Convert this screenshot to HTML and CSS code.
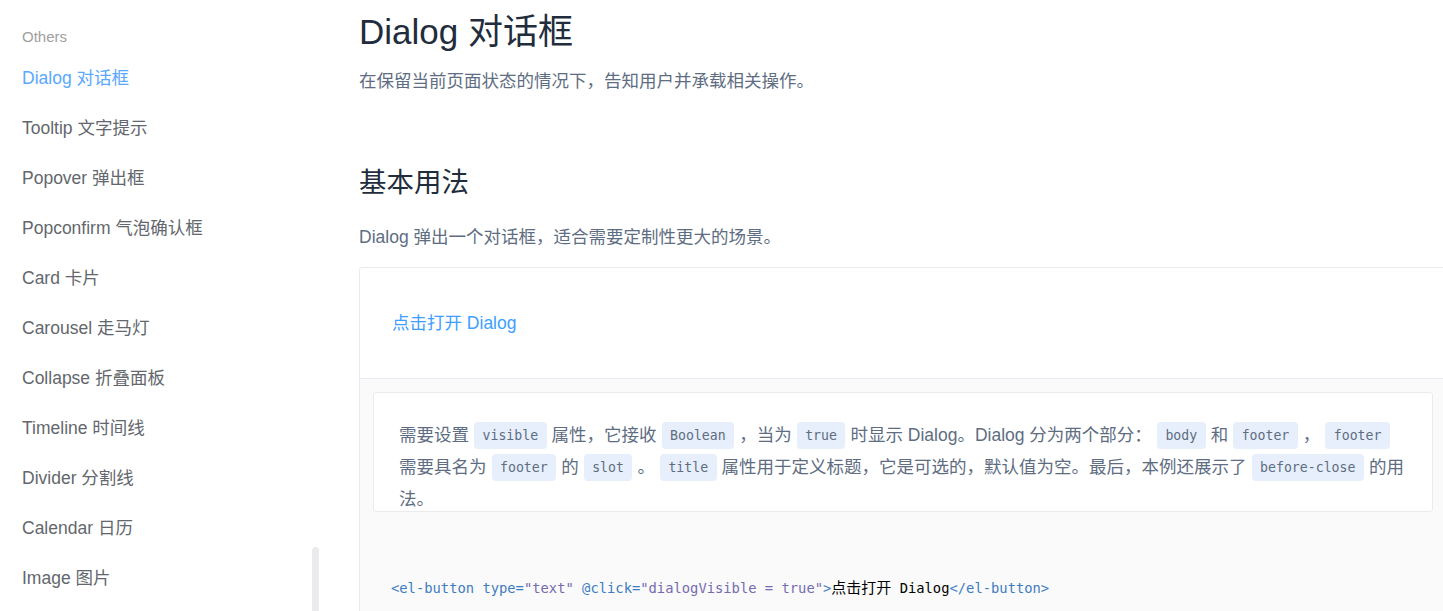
FILE: index.html
```html
<!DOCTYPE html>
<html lang="zh-CN">
<head>
<meta charset="utf-8">
<title>Dialog 对话框</title>
<link rel="stylesheet" href="styles.css">
</head>
<body>
<div class="page">
  <aside class="sidebar">
    <div class="group-title">Others</div>
    <ul class="nav">
      <li class="nav-item active">Dialog 对话框</li>
      <li class="nav-item">Tooltip 文字提示</li>
      <li class="nav-item">Popover 弹出框</li>
      <li class="nav-item">Popconfirm 气泡确认框</li>
      <li class="nav-item">Card 卡片</li>
      <li class="nav-item">Carousel 走马灯</li>
      <li class="nav-item">Collapse 折叠面板</li>
      <li class="nav-item">Timeline 时间线</li>
      <li class="nav-item">Divider 分割线</li>
      <li class="nav-item">Calendar 日历</li>
      <li class="nav-item">Image 图片</li>
    </ul>
    <div class="scroll-thumb"></div>
  </aside>
  <main class="main">
    <h2 class="title">Dialog 对话框</h2>
    <p class="lead">在保留当前页面状态的情况下，告知用户并承载相关操作。</p>
    <h3 class="subtitle">基本用法</h3>
    <p class="lead lead-sub">Dialog 弹出一个对话框，适合需要定制性更大的场景。</p>
    <div class="demo-block">
      <div class="source">
        <span class="text-button">点击打开 Dialog</span>
      </div>
      <div class="meta">
        <div class="description">需要设置<code class="chip">visible</code>属性，它接收<code class="chip">Boolean</code>，当为<code class="chip">true</code>时显示 Dialog。Dialog 分为两个部分：<code class="chip">body</code>和<code class="chip">footer</code>，<code class="chip">footer</code>需要具名为<code class="chip">footer</code>的<code class="chip">slot</code>。<code class="chip">title</code>属性用于定义标题，它是可选的，默认值为空。最后，本例还展示了<code class="chip">before-close</code>的用法。</div>
        <pre class="code"><span class="tag">&lt;el-button</span> <span class="attr">type=</span><span class="str">"text"</span> <span class="attr">@click=</span><span class="str">"dialogVisible = true"</span><span class="tag">&gt;</span><span class="cjk">点击打开</span><span class="plain"> Dialog</span><span class="tag">&lt;/el-button&gt;</span></pre>
      </div>
    </div>
  </main>
</div>
</body>
</html>
```
FILE: styles.css
```css
html, body {
  margin: 0;
  padding: 0;
  overflow: hidden;
  background: #fff;
}
body {
  font-family: "Liberation Sans", "Noto Sans CJK SC", sans-serif;
  width: 1443px;
  height: 611px;
}
.page {
  display: flex;
  align-items: flex-start;
  height: 611px;
  overflow: hidden;
}
.sidebar {
  position: relative;
  flex: none;
  width: 359px;
  height: 611px;
  padding-left: 22px;
  box-sizing: border-box;
}
.group-title {
  margin-top: 24px;
  margin-bottom: 3px;
  line-height: 26px;
  font-size: 15px;
  color: #a0a0a0;
}
.nav {
  list-style: none;
  margin: 0;
  padding: 0;
}
.nav-item {
  line-height: 50px;
  height: 50px;
  font-size: 17.5px;
  color: #63676d;
}
.nav-item.active {
  color: #5aa8ff;
}
.scroll-thumb {
  position: absolute;
  left: 312px;
  top: 547px;
  width: 7px;
  height: 120px;
  border-radius: 4px;
  background: #ebebee;
}
.main {
  flex: none;
  width: 1088px;
  height: 611px;
  padding-top: 8px;
  box-sizing: border-box;
  overflow: hidden;
}
.title {
  margin: 0 0 12px;
  font-size: 35px;
  line-height: 48px;
  font-weight: normal;
  color: #1f2d3d;
}
.lead {
  margin: 0;
  font-size: 17.5px;
  line-height: 26px;
  color: #5e6d82;
}
.subtitle {
  margin: 69px 0 21px;
  font-size: 27.5px;
  line-height: 40px;
  font-weight: normal;
  color: #1f2d3d;
}
.lead-sub {
  margin-bottom: 17px;
}
.demo-block {
  border: 1px solid #ebebeb;
  border-radius: 3px;
}
.source {
  padding: 30px 32px;
}
.text-button {
  display: block;
  height: 50px;
  line-height: 50px;
  font-size: 17.5px;
  color: #409eff;
}
.meta {
  background: #fafafa;
  border-top: 1px solid #eaeefb;
  padding: 13px 13px 0;
  height: 240px;
}
.description {
  background: #fff;
  border: 1px solid #ebebeb;
  border-radius: 3px;
  padding: 26px 25px 0;
  height: 120px;
  box-sizing: border-box;
  font-size: 17.5px;
  line-height: 32px;
  color: #5e6d82;
}
.chip {
  display: inline-block;
  margin: 0 5px;
  padding: 0 8.5px;
  height: 27px;
  line-height: 27px;
  border-radius: 4px;
  background: #e6effb;
  color: #5e6d82;
  font-family: "DejaVu Sans Mono", monospace;
  font-size: 13.2px;
  transform: translateY(-1px);
  vertical-align: baseline;
}
.code {
  margin: 0;
  padding: 61px 18px 0;
  font-family: "DejaVu Sans Mono", "Noto Sans CJK SC", monospace;
  font-size: 13.8px;
  line-height: 27px;
  color: #000;
}
.tag, .attr {
  color: #3e7cc2;
}
.str {
  color: #756bb1;
}
.plain {
  color: #000;
}
.cjk {
  color: #000;
  font-family: "Noto Sans CJK SC", sans-serif;
  font-size: 15px;
}
```
